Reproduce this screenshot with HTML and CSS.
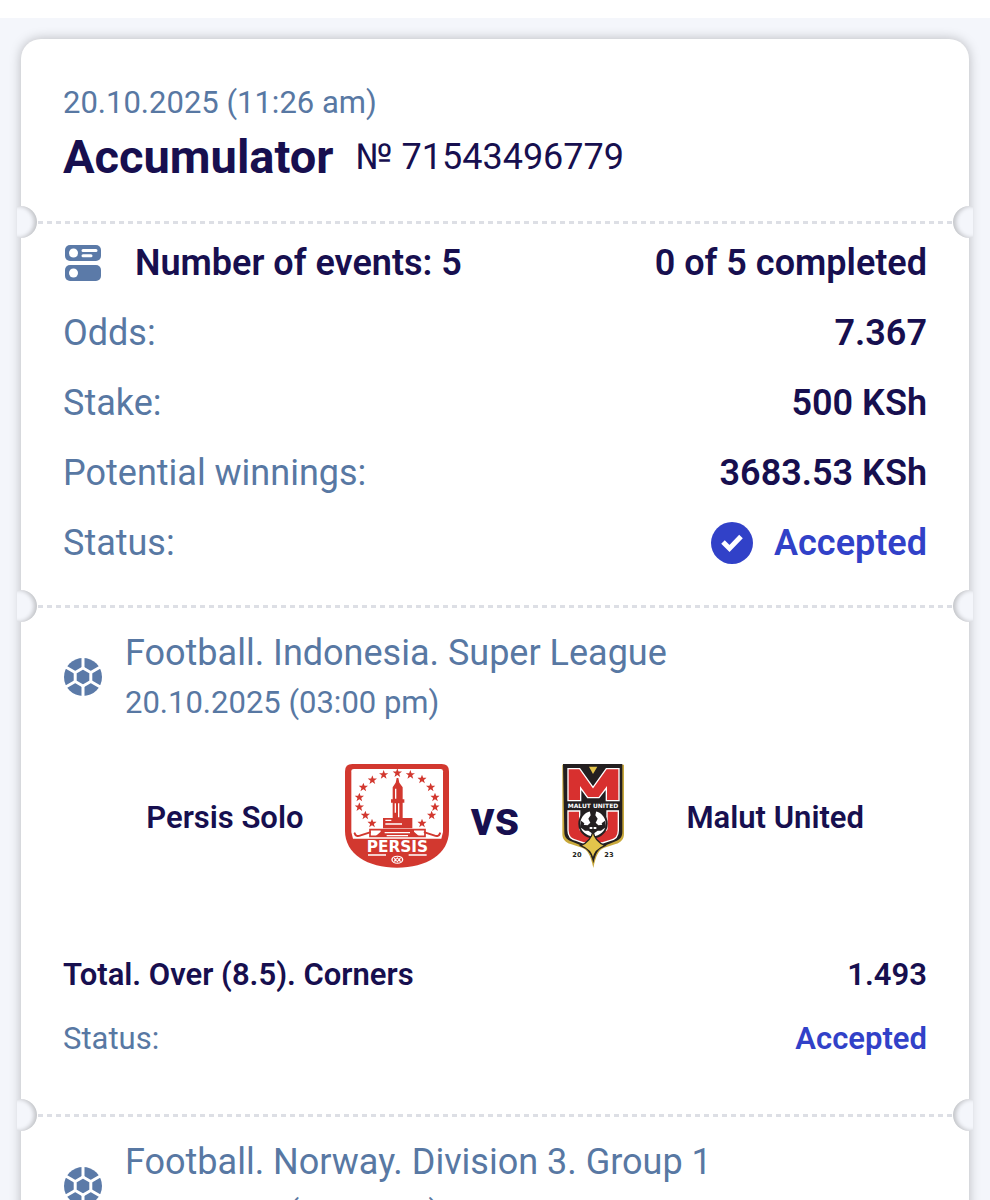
FILE: index.html
```html
<!DOCTYPE html>
<html lang="en">
<head>
  <meta charset="UTF-8" />
  <meta name="viewport" content="width=device-width, initial-scale=1.0" />
  <title>Accumulator</title>
  <link rel="stylesheet" href="styles.css">
</head>
<body>
  <!-- shared shapes -->
  <svg class="defs" aria-hidden="true">
    <symbol id="ball" viewBox="0 0 40 40">
      <circle cx="20" cy="20" r="19" fill="#5b7aa8" />
      <g fill="none" stroke="#fff" stroke-width="3">
        <path d="M20 11l7.8 4.5v9L20 29l-7.8-4.5v-9z" />
        <path d="M20 0v11M20 29v11M27.8 15.5l9.5-5.5M27.8 24.5l9.5 5.5M12.2 15.5L2.7 10M12.2 24.5L2.7 30" />
      </g>
    </symbol>
    <symbol id="star" viewBox="-14 -14 28 28">
      <path fill="#d2382f" d="M0-14L3.6-4.5H14L5.6 2 8.6 12 0 6-8.6 12-5.6 2-14-4.5h10.4z" />
    </symbol>
  </svg>

  <main class="page">
    <article class="ticket">
      <header class="section head">
        <time class="date">20.10.2025 (11:26 am)</time>
        <div class="title">
          <h1>Accumulator</h1>
          <span class="number">№ 71543496779</span>
        </div>
      </header>

      <section class="section summary">
        <div class="row strong">
          <span class="events">
            <svg class="events-icon" viewBox="0 0 36 36" aria-hidden="true">
              <rect width="36" height="16" y="0" rx="5" fill="#5b7aa8" />
              <rect width="36" height="16" y="20" rx="5" fill="#5b7aa8" />
              <circle cx="8.5" cy="8" r="4.5" fill="#fff" />
              <circle cx="8.5" cy="28" r="4.5" fill="#fff" />
              <path d="M18 5.5h13M18 10.8h8" stroke="#fff" stroke-width="3" stroke-linecap="round" />
            </svg>
            Number of events: 5
          </span>
          <span>0 of 5 completed</span>
        </div>
        <div class="row"><span>Odds:</span><b>7.367</b></div>
        <div class="row"><span>Stake:</span><b>500 KSh</b></div>
        <div class="row"><span>Potential winnings:</span><b>3683.53 KSh</b></div>
        <div class="row">
          <span>Status:</span>
          <b class="accepted">
            <svg class="check" viewBox="0 0 42 42" aria-hidden="true">
              <circle cx="21" cy="21" r="21" fill="#3141c8" />
              <path d="M12 20l6.5 6.5L30 14.5" fill="none" stroke="#fff" stroke-width="5" />
            </svg>
            Accepted
          </b>
        </div>
      </section>

      <section class="section event">
        <div class="league">
          <svg class="ball" aria-hidden="true"><use href="#ball" /></svg>
          <div class="league-text">
            <h2>Football. Indonesia. Super League</h2>
            <time class="date">20.10.2025 (03:00 pm)</time>
          </div>
        </div>

        <div class="teams">
          <span class="team home">Persis Solo</span>
          <div class="versus">
            <svg class="logo" viewBox="43 42 312 312" role="img" aria-label="Persis Solo">
              <path fill="#d2382f" d="M65 42h268q22 0 22 22v178c0 70-68 111-156 111S43 312 43 242V64q0-22 22-22z" />
              <path fill="#fff" d="M70 57h260q7 0 7 7v182l-5 20H67l-5-20V64q0-7 8-7z" />
              <g>
                <use href="#star" x="186" y="55" width="28" height="28" />
                <use href="#star" x="225" y="60" width="28" height="28" />
                <use href="#star" x="145" y="60" width="28" height="28" />
                <use href="#star" x="260" y="74" width="28" height="28" />
                <use href="#star" x="111" y="76" width="28" height="28" />
                <use href="#star" x="286" y="98" width="28" height="28" />
                <use href="#star" x="84" y="98" width="28" height="28" />
                <use href="#star" x="299" y="128" width="28" height="28" />
                <use href="#star" x="72" y="128" width="28" height="28" />
                <use href="#star" x="299" y="157" width="28" height="28" />
                <use href="#star" x="72" y="157" width="28" height="28" />
                <use href="#star" x="289" y="182" width="28" height="28" />
                <use href="#star" x="90" y="182" width="28" height="28" />
                <use href="#star" x="260" y="206" width="28" height="28" />
                <use href="#star" x="110" y="206" width="28" height="28" />
              </g>
              <!-- monument -->
              <path fill="#d2382f" d="M198 84h5l3 14 10 14v36h5v10h-5v46h29v31H157v-31h29v-46h-5v-10h5v-36l9-14z" />
              <path stroke="#fff" stroke-width="4" fill="none" d="M195 116v30M204 160v42M194 160v28M164 211h18M164 222h50" />
              <!-- base with scrolls -->
              <path fill="#fff" stroke="#d2382f" stroke-width="5" d="M118 239h165v20H118z" />
              <path fill="#d2382f" d="M150 237h100v8l18 16H132l18-16z" />
              <path stroke="#fff" stroke-width="4" fill="none" d="M162 248h76M168 257h64" />
              <path fill="none" stroke="#d2382f" stroke-width="6" stroke-linecap="round" d="M72 250q4 12 18 6l28-9M328 250q-4 12-18 6l-28-9" />
              <text class="persis-name" x="200" y="307" text-anchor="middle">PERSIS</text>
              <path stroke="#fff" stroke-width="4" d="M112 315h54M234 315h54" />
              <ellipse cx="200" cy="329" rx="18" ry="12" fill="#fff" />
              <ellipse cx="200" cy="329" rx="14" ry="9" fill="#d2382f" />
              <path d="M188 322l8 4 4-5 4 5 8-4-4 7 4 7-9-3-3 5-3-5-9 3 4-7z" fill="#fff" />
              <circle cx="200" cy="329" r="3" fill="#d2382f" />
            </svg>
            <span class="vs">vs</span>
            <svg class="logo" viewBox="-24 42 312 312" role="img" aria-label="Malut United">
              <path fill="#c9a93c" d="M40 44h185v207c0 16-9 26-25 31l-34 11c-17 7-25 22-33 61-8-39-17-54-34-61l-34-11c-16-5-25-15-25-31z" />
              <path fill="#231f20" d="M42 42h178v204c0 16-8 24-24 29l-29 12c-19 7-28 24-34 53-6-29-15-46-34-53l-29-12c-16-5-24-13-24-29z" />
              <path fill="#d8302f" stroke="#fff" stroke-width="4" d="M57 56h35l40 56 40-56h38v96h-38v-38l-22 29h-34L95 114v38H57z" />
              <path fill="#e3c44b" d="M120 50h25l-13 22z" />
              <text class="malut-name" x="132" y="173" text-anchor="middle">MALUT UNITED</text>
              <path fill="#d8302f" stroke="#fff" stroke-width="4" d="M57 183h35v51q0 8 8 8h66q8 0 8-8v-51h34v58q0 26-24 30l-24 8H104l-22-8q-25-4-25-30z" />
              <!-- football -->
              <circle cx="132" cy="221" r="44" fill="#231f20" />
              <circle cx="132" cy="221" r="38" fill="#fff" />
              <path fill="#231f20" d="M122 182h20l-3 14 7 10-6 12 8 8 16-2 6 8-14 10h-10l-14 10-14-10h-10l-14-10 6-8 16 2 8-8-6-12 7-10z" />
              <path fill="#fff" d="M122 231h8v6h-8zM134 231h8v6h-8z" />
              <path fill="#231f20" d="M96 212l10 8-4 12-9-2zM168 212l-10 8 4 12 9-2z" />
              <path fill="#e3c44b" stroke="#231f20" stroke-width="4" d="M132 244q5 29 36 43-31 12-36 40-6-28-37-40 31-14 37-43z" />
              <text class="malut-year" x="84" y="322" text-anchor="middle">20</text>
              <text class="malut-year" x="180" y="322" text-anchor="middle">23</text>
            </svg>
          </div>
          <span class="team away">Malut United</span>
        </div>

        <div class="bet">
          <div class="row strong"><span>Total. Over (8.5). Corners</span><b>1.493</b></div>
          <div class="row"><span>Status:</span><b class="accepted">Accepted</b></div>
        </div>
      </section>

      <section class="section event">
        <div class="league">
          <svg class="ball" aria-hidden="true"><use href="#ball" /></svg>
          <div class="league-text">
            <h2>Football. Norway. Division 3. Group 1</h2>
            <time class="date">20.10.2025 (07:00 pm)</time>
          </div>
        </div>
      </section>
    </article>
  </main>
</body>
</html>
```
FILE: styles.css
```css
body {
  margin: 0;
  padding-top: 18px;
  box-sizing: border-box;
  height: 100vh;
  overflow: hidden;
  background-color: #fff;
  font-family: Roboto, "Liberation Sans", sans-serif;
  color: #170f4f;
}
.defs {
  display: none;
}
.page {
  padding: 21px;
  background-color: #f4f6fb;
}
.ticket {
  background-color: #fff;
  border-radius: 20px;
  box-shadow: 0 0 12px rgba(0, 0, 0, 0.25);
}
.section {
  position: relative;
  padding: 0 42px;
}
/* dashed tear line */
.section + .section {
  background: repeating-linear-gradient(90deg, #dddfe5 0 5px, transparent 5px 9px) 17px 0 / calc(100% - 34px) 3px no-repeat;
}
/* notches on both ends of the tear line */
.section + .section::before,
.section + .section::after {
  content: "";
  position: absolute;
  top: -15px;
  width: 32px;
  height: 32px;
  border-radius: 50%;
  background-color: #f4f6fb;
}
.section + .section::before {
  left: -16px;
  box-shadow: inset -3px 0 4px rgba(0, 0, 0, 0.2);
  clip-path: inset(0 0 0 12px);
}
.section + .section::after {
  right: -16px;
  box-shadow: inset 3px 0 4px rgba(0, 0, 0, 0.2);
  clip-path: inset(0 12px 0 0);
}
h1, h2 {
  margin: 0;
}
.date {
  display: block;
  font-size: 31px;
  line-height: 40px;
  color: #5878a3;
}
.head {
  padding-top: 44px;
  padding-bottom: 36px;
}
.title {
  display: flex;
  align-items: center;
  gap: 22px;
  margin-top: 6px;
  line-height: 56px;
}
h1 {
  font-size: 47px;
  font-weight: 700;
}
.number {
  font-size: 36px;
}
.row {
  display: flex;
  justify-content: space-between;
  align-items: center;
  color: #5878a3;
}
.row b {
  font-weight: 600;
  color: #170f4f;
}
.row.strong {
  font-weight: 600;
  color: #170f4f;
}
.row .accepted {
  display: flex;
  align-items: center;
  gap: 21px;
  color: #3141c8;
}
.summary {
  display: flex;
  flex-direction: column;
  gap: 28px;
  padding-top: 21px;
  padding-bottom: 41px;
  font-size: 36px;
  line-height: 42px;
}
.events {
  display: flex;
  align-items: center;
  gap: 34px;
}
.events-icon {
  width: 36px;
  height: 36px;
  margin-left: 2px;
}
.check {
  width: 42px;
  height: 42px;
}
.event {
  padding-top: 26px;
  padding-bottom: 55px;
}
.league {
  display: flex;
  align-items: center;
  gap: 22px;
}
.ball {
  width: 40px;
  height: 40px;
}
.league-text {
  display: flex;
  flex-direction: column;
  gap: 8px;
}
h2 {
  font-size: 36px;
  line-height: 44px;
  font-weight: 400;
  color: #5878a3;
}
.teams {
  display: grid;
  grid-template-columns: 1fr auto 1fr;
  align-items: center;
  gap: 41px;
  margin-top: 41px;
}
.team {
  padding-top: 4px;
  font-size: 31px;
  line-height: 40px;
  font-weight: 600;
}
.home {
  text-align: right;
}
.versus {
  display: flex;
  align-items: center;
  gap: 22px;
}
.logo {
  width: 104px;
  height: 104px;
}
.vs {
  padding-top: 4px;
  font-size: 48px;
  font-weight: 700;
}
.persis-name {
  font: 700 46px "DejaVu Sans", sans-serif;
  fill: #fff;
}
.malut-name {
  font: 700 18px "DejaVu Sans", sans-serif;
  fill: #fff;
}
.malut-year {
  font: 700 20px "DejaVu Sans", sans-serif;
  fill: #231f20;
}
.bet {
  display: flex;
  flex-direction: column;
  gap: 24px;
  margin-top: 87px;
  font-size: 31px;
  line-height: 40px;
}
```
